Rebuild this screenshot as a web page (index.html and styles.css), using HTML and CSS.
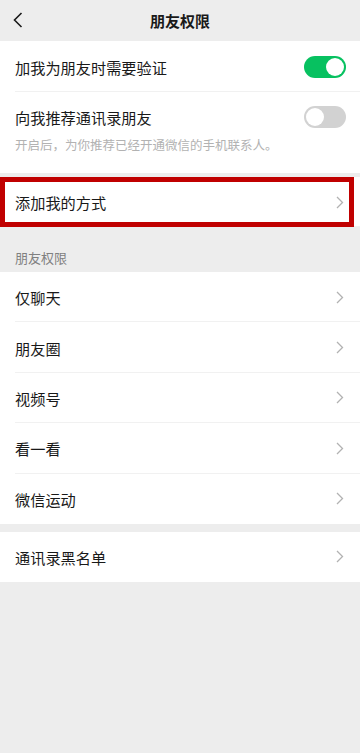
FILE: index.html
```html
<!DOCTYPE html>
<html lang="zh-CN">
<head>
<meta charset="utf-8">
<title>朋友权限</title>
<link rel="stylesheet" href="styles.css">
</head>
<body>
<div class="page">
  <header class="nav">
    <svg class="back" width="10" height="16" viewBox="0 0 10 16"><path d="M8.5 1 L1.5 8 L8.5 15" fill="none" stroke="#1a1a1a" stroke-width="1.6"/></svg>
    <div class="title">朋友权限</div>
  </header>

  <section class="group first">
    <div class="row">
      <span class="label">加我为朋友时需要验证</span>
      <span class="switch on"><span class="knob"></span></span>
    </div>
    <div class="row tall">
      <div class="row-main">
        <span class="label">向我推荐通讯录朋友</span>
        <span class="switch"><span class="knob"></span></span>
      </div>
      <div class="hint">开启后，为你推荐已经开通微信的手机联系人。</div>
    </div>
  </section>

  <section class="group gap highlighted">
    <div class="row link">
      <span class="label">添加我的方式</span>
      <svg class="chev" width="8" height="13" viewBox="0 0 8 13"><path d="M1 1 L6.5 6.5 L1 12" fill="none" stroke="#b2b2b2" stroke-width="1.3"/></svg>
    </div>
    <div class="mark"></div>
  </section>

  <div class="section-title">朋友权限</div>
  <section class="group list">
    <div class="row link"><span class="label">仅聊天</span><svg class="chev" width="8" height="13" viewBox="0 0 8 13"><path d="M1 1 L6.5 6.5 L1 12" fill="none" stroke="#b2b2b2" stroke-width="1.3"/></svg></div>
    <div class="row link"><span class="label">朋友圈</span><svg class="chev" width="8" height="13" viewBox="0 0 8 13"><path d="M1 1 L6.5 6.5 L1 12" fill="none" stroke="#b2b2b2" stroke-width="1.3"/></svg></div>
    <div class="row link"><span class="label">视频号</span><svg class="chev" width="8" height="13" viewBox="0 0 8 13"><path d="M1 1 L6.5 6.5 L1 12" fill="none" stroke="#b2b2b2" stroke-width="1.3"/></svg></div>
    <div class="row link"><span class="label">看一看</span><svg class="chev" width="8" height="13" viewBox="0 0 8 13"><path d="M1 1 L6.5 6.5 L1 12" fill="none" stroke="#b2b2b2" stroke-width="1.3"/></svg></div>
    <div class="row link"><span class="label">微信运动</span><svg class="chev" width="8" height="13" viewBox="0 0 8 13"><path d="M1 1 L6.5 6.5 L1 12" fill="none" stroke="#b2b2b2" stroke-width="1.3"/></svg></div>
  </section>

  <section class="group gap-small">
    <div class="row link"><span class="label">通讯录黑名单</span><svg class="chev" width="8" height="13" viewBox="0 0 8 13"><path d="M1 1 L6.5 6.5 L1 12" fill="none" stroke="#b2b2b2" stroke-width="1.3"/></svg></div>
  </section>
</div>
</body>
</html>
```

FILE: styles.css
```css
* { box-sizing: border-box; }
html, body {
  margin: 0;
  padding: 0;
  background: #ededed;
  font-family: "Noto Sans CJK SC", "Noto Sans", sans-serif;
  color: #191919;
}
.page {
  width: 360px;
  min-height: 753px;
  background: #ededed;
}
.nav {
  height: 41px;
  display: flex;
  align-items: center;
  justify-content: center;
  position: relative;
}
.back {
  position: absolute;
  left: 13px;
  top: 12px;
}
.title {
  font-size: 15px;
  font-weight: 700;
  color: #191919;
}
.group {
  background: #fff;
  position: relative;
}
.gap { margin-top: 4px; }
.gap-small { margin-top: 8px; }
.row {
  height: 50px;
  display: flex;
  align-items: center;
  justify-content: space-between;
  padding: 0 16px 0 15px;
  position: relative;
}
.list .row { height: 50.4px; }
.row::after {
  content: "";
  position: absolute;
  left: 15px;
  right: 0;
  bottom: 0;
  height: 1px;
  background: #f1f1f1;
}
.row:last-child::after { display: none; }
.first .row:first-child { height: 51px; }
.row.tall {
  height: 81px;
  flex-direction: column;
  align-items: stretch;
  justify-content: flex-start;
  padding-top: 12px;
}
.row-main {
  display: flex;
  align-items: center;
  justify-content: space-between;
  height: 26px;
}
.hint {
  font-size: 12.5px;
  color: #b2b2b2;
  margin-top: 6px;
  line-height: 18px;
}
.label {
  font-size: 15.2px;
  line-height: 22px;
  color: #191919;
}
.switch {
  width: 42px;
  height: 22px;
  border-radius: 11px;
  background: #d2d2d2;
  position: relative;
  display: inline-block;
  margin-right: -2px;
}
.switch .knob {
  position: absolute;
  top: 2px;
  left: 2px;
  width: 18px;
  height: 18px;
  border-radius: 50%;
  background: #fff;
}
.switch.on { background: #07c160; }
.switch.on .knob { left: 22px; }
.highlighted .row { height: 50px; }
.mark {
  position: absolute;
  left: 0;
  top: 0;
  width: 354px;
  height: 50px;
  border: 5px solid #c00000;
  pointer-events: none;
}
.section-title {
  height: 45px;
  padding: 23px 0 0 15px;
  font-size: 13px;
  color: #808080;
  line-height: 16px;
}
```
